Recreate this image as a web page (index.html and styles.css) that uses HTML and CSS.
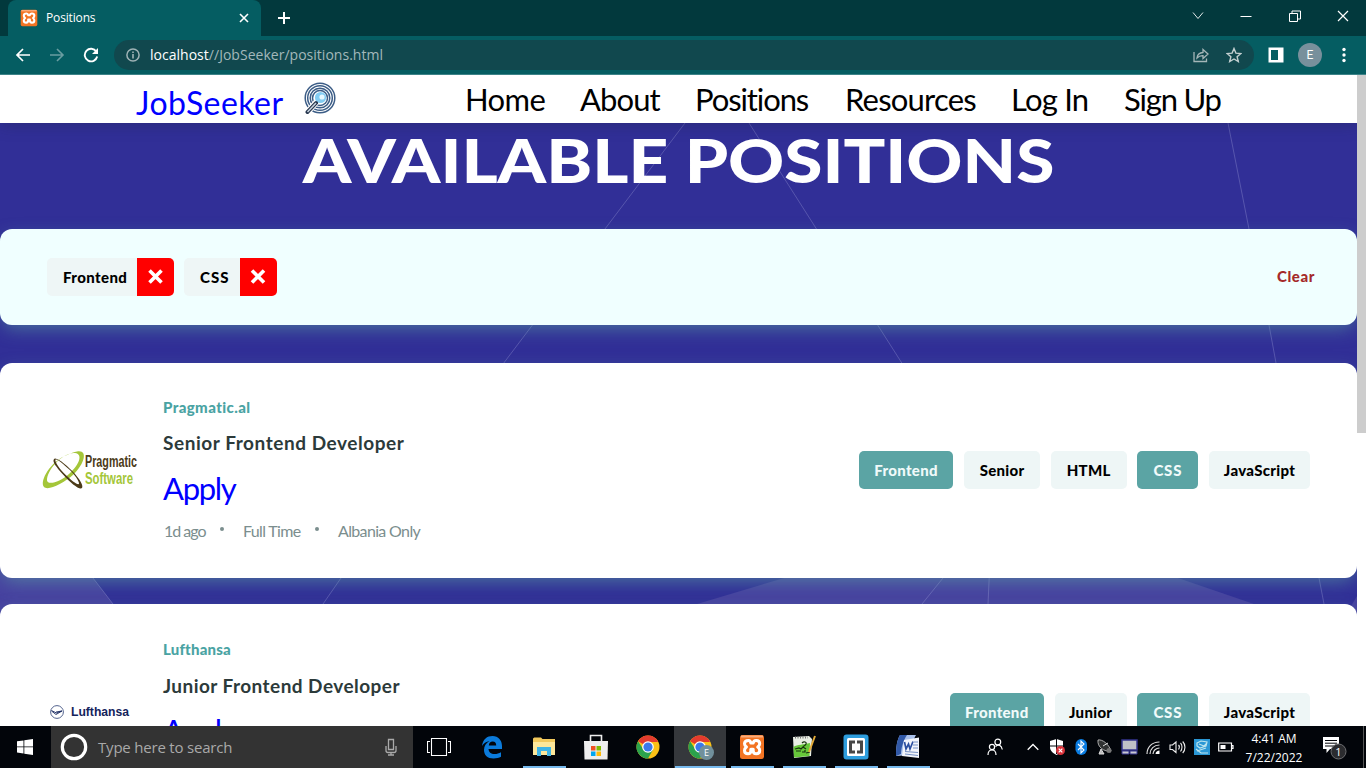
FILE: index.html
```html
<!DOCTYPE html>
<html lang="en">
<head>
<meta charset="utf-8">
<title>Positions</title>
<link rel="stylesheet" href="styles.css">
</head>
<body>
<svg class="defs" width="0" height="0" aria-hidden="true">
  <symbol id="xampp" viewBox="0 0 26 26">
    <rect x="1" y="1" width="24" height="24" rx="2.500" fill="#f37423"/>
    <path d="M2 2.500h22" stroke="#f9ad7c" stroke-width="2"/>
    <path d="M9.500 6.500c-3 0-4 1.200-4 3.200 0 1.700.8 2.500 2 3.300-1.200.8-2 1.800-2 3.500 0 2 1.200 3.200 3.500 3.200 2 0 2.800-1.200 2.800-3v-1.500h2.400v1.500c0 1.800 1 3 3 3 2.200 0 3.500-1.200 3.500-3.200 0-1.700-.8-2.700-2-3.500 1.200-.8 2-1.600 2-3.300 0-2-1.200-3.200-3.500-3.200-2 0-2.800 1-3 2.500h-2.400c-.2-1.500-.8-2.500-2.300-2.500z" fill="none" stroke="#fff" stroke-width="3" stroke-linejoin="round"/>
  </symbol>
  <symbol id="chrome" viewBox="0 0 24 24">
    <circle cx="12" cy="12" r="11.500" fill="#fbc116"/>
    <path d="M12 12 2.040 6.250A11.500 11.500 0 0 1 21.960 6.250L21.500 7H12z" fill="#e33b2e"/>
    <path d="M2.040 6.250A11.500 11.500 0 0 0 12 23.500L16.800 15 12 12 7.500 14.500z" fill="#2ba24c"/>
    <circle cx="12" cy="12" r="5.800" fill="#fff"/><circle cx="12" cy="12" r="4.600" fill="#3b79ea"/>
  </symbol>
</svg>

<div class="tabstrip">
  <div class="tab">
    <svg class="favicon" width="18" height="18"><use href="#xampp"/></svg>
    <span class="tab-title">Positions</span>
    <svg class="tab-close" width="10" height="10" viewBox="0 0 10 10"><path d="M1 1l8 8M9 1L1 9" stroke="#fff" stroke-width="1.600"/></svg>
  </div>
  <svg class="plus" width="14" height="14" viewBox="0 0 14 14"><path d="M7 1v12M1 7h12" stroke="#fff" stroke-width="2"/></svg>
  <div class="winbtns">
    <svg width="12" height="12" viewBox="0 0 12 12"><path d="M1 2.500l5 6 5-6" fill="none" stroke="#e0e8e8"/></svg>
    <svg width="12" height="12" viewBox="0 0 12 12"><path d="M.5 6.500h11" stroke="#fff"/></svg>
    <svg width="12" height="12" viewBox="0 0 12 12"><path d="M.5 3.500h8v8h-8zM3 3V1h8.500v8H9" fill="none" stroke="#fff"/></svg>
    <svg width="12" height="12" viewBox="0 0 12 12"><path d="M1 1l10 10M11 1L1 11" stroke="#fff" stroke-width="1.200"/></svg>
  </div>
</div>

<div class="toolbar">
  <svg class="nav-icon" width="16" height="16" viewBox="0 0 16 16"><path d="M15 8H2M8 2L2 8l6 6" fill="none" stroke="#fff" stroke-width="1.700"/></svg>
  <svg class="nav-icon" width="16" height="16" viewBox="0 0 16 16"><path d="M1 8h13M8 2l6 6-6 6" fill="none" stroke="#6a9da1" stroke-width="1.600"/></svg>
  <svg class="nav-icon" width="16" height="16" viewBox="0 0 16 16"><path d="M13.300 4.500A6.300 6.300 0 1 0 14.200 9.500" fill="none" stroke="#fff" stroke-width="1.900"/><path d="M15 1v6H9z" fill="#fff"/></svg>
  <div class="omnibox">
    <svg width="14" height="14" viewBox="0 0 14 14"><circle cx="7" cy="7" r="6.100" fill="none" stroke="#9fb3b6" stroke-width="1.500"/><path d="M7 6v4.500M7 3.500v1.500" stroke="#9fb3b6" stroke-width="1.600"/></svg>
    <span class="url"><b>localhost</b>//JobSeeker/positions.html</span>
    <svg class="share" width="16" height="16" viewBox="0 0 16 16"><path d="M1 5v9.500h12.500v-3M4 11c.4-3.500 2.500-5.300 6-5.500V2.500l5 4.500-5 4.500V8.700C7.200 8.500 5.500 9.500 4 11z" fill="none" stroke="#a5b6b8" stroke-width="1.300"/></svg>
    <svg width="16" height="16" viewBox="0 0 16 16"><path d="M8 1.500l1.900 4.600 5 .4-3.800 3.200 1.200 4.800L8 12l-4.300 2.500 1.200-4.800L1.100 6.500l5-.4z" fill="none" stroke="#c2cfd0" stroke-width="1.400"/></svg>
  </div>
  <svg class="panel" width="16" height="16" viewBox="0 0 16 16"><path d="M.5.500h15v15H.5zM3 3v10h7V3z" fill="#fff" fill-rule="evenodd"/></svg>
  <span class="avatar">E</span>
  <svg class="dots" width="4" height="16" viewBox="0 0 4 16" fill="#fff"><circle cx="2" cy="2.500" r="1.700"/><circle cx="2" cy="8" r="1.700"/><circle cx="2" cy="13.500" r="1.700"/></svg>
</div>

<div class="viewport">
  <main class="page">
    <svg class="bg" width="1357" height="651" viewBox="0 75 1357 651">
      <g fill="#4742a0">
        <path d="M0 552h73l40 52v10H0z"/>
        <path d="M697 604l87-26h394l76 26z"/>
        <path d="M1357 596v20h-12z"/>
      </g>
      <g stroke="#a9a7dd" stroke-opacity=".32" fill="none">
        <path d="M685 123L500 368M749 123L905 368M1228 123l21 106 20 96 7 38 43 215 5 26M93 578l20 26M341 578l-18 26M990 560l-2 44M943 578l-21 26"/>
      </g>
    </svg>
    <header class="header">
      <a class="brand">JobSeeker</a>
      <svg class="logo" width="32" height="32" viewBox="0 0 32 32">
        <g fill="none" stroke="#3c5d86" stroke-width="1.500"><circle cx="16" cy="16" r="14.800"/><circle cx="16" cy="16" r="12.300"/><circle cx="16" cy="16" r="9.800"/><circle cx="16" cy="16" r="7.500"/></g>
        <circle cx="16.500" cy="15.500" r="5.600" fill="#83cdf3"/><circle cx="18" cy="15" r="2.600" fill="#e8f8ff"/>
        <path d="M12.500 20L3.500 30" stroke="#fff" stroke-width="6"/><path d="M12 21L3.500 30" stroke="#26364d" stroke-width="4" stroke-linecap="round"/><path d="M12 21L3.500 30" stroke="#c8d3df" stroke-width="1.500"/>
      </svg>
      <nav class="menu">
        <a class="m-home">Home</a><a class="m-about">About</a><a class="m-pos">Positions</a><a class="m-res">Resources</a><a class="m-log">Log In</a><a class="m-sign">Sign Up</a>
      </nav>
    </header>
    <h1 class="title">AVAILABLE POSITIONS</h1>
    <section class="filters">
      <div class="filter"><span class="tag-label t-front">Frontend</span><svg class="remove" width="37" height="38" viewBox="0 0 37 38"><path d="M12.500 12.500l12 12M24.500 12.500l-12 12" stroke="#fff" stroke-width="3.600"/></svg></div>
      <div class="filter"><span class="tag-label t-css">CSS</span><svg class="remove" width="37" height="38" viewBox="0 0 37 38"><path d="M12 12.500l12 12M24 12.500l-12 12" stroke="#fff" stroke-width="3.600"/></svg></div>
      <span class="clear">Clear</span>
    </section>

    <article class="card">
      <div class="company-logo">
        <svg width="96" height="40" viewBox="0 0 96 40">
          <path fill-rule="evenodd" d="M35 1.500C46-.5 43 13 32 24 21 34 6 41 2 37-3 31 9 11 25 5c4-2 7-3 10-3.500zM33 3C22 2 7 17 5 29c-1 7 12 4 22-5C38 14 41 4 33 3z" fill="#a4c639"/>
          <path fill-rule="evenodd" d="M12 9c2-3 14 7 21 15s9 14 6 14.500-11-6-18-14S10 12 12 9zm1.500.7c-1 2 4 9 10 15s13 11 13.500 9-4-9-10-14.500-12.500-11-13.500-9.500z" fill="#4b3a18"/>
          <text x="43" y="17" class="prag-a" textLength="52" lengthAdjust="spacingAndGlyphs">Pragmatic</text>
          <text x="43" y="33.500" class="prag-b" textLength="48" lengthAdjust="spacingAndGlyphs">Software</text>
        </svg>
      </div>
      <div class="info">
        <p class="company c-prag">Pragmatic.al</p>
        <h2 class="job j-senior">Senior Frontend Developer</h2>
        <a class="apply">Apply</a>
        <p class="meta"><span class="when">1d ago</span><i class="dot"></i><span class="kind">Full Time</span><i class="dot"></i><span class="where">Albania Only</span></p>
      </div>
      <div class="tags">
        <span class="tag on t-front">Frontend</span><span class="tag t-senior">Senior</span><span class="tag t-html">HTML</span><span class="tag on t-css">CSS</span><span class="tag t-js">JavaScript</span>
      </div>
    </article>

    <article class="card second">
      <div class="company-logo">
        <svg width="96" height="20" viewBox="0 0 96 20">
          <circle cx="15" cy="10" r="6.400" fill="none" stroke="#53638e"/><path d="M9.500 8.500l5 2.500 5-2M9.500 9l4.500 3.500 6-3.500-6 1" fill="none" stroke="#1b2b62" stroke-width=".9"/>
          <text x="29" y="14" class="luft" textLength="58" lengthAdjust="spacingAndGlyphs">Lufthansa</text>
        </svg>
      </div>
      <div class="info">
        <p class="company c-luft">Lufthansa</p>
        <h2 class="job j-junior">Junior Frontend Developer</h2>
        <a class="apply">Apply</a>
      </div>
      <div class="tags">
        <span class="tag on t-front">Frontend</span><span class="tag t-junior">Junior</span><span class="tag on t-css">CSS</span><span class="tag t-js">JavaScript</span>
      </div>
    </article>
  </main>
  <div class="scrollbar"><div class="thumb"></div></div>
</div>

<footer class="taskbar">
  <div class="start"><svg width="16" height="16" viewBox="0 0 16 16" fill="#fff"><path d="M0 2.300L6.500 1.400v6.100H0zM7.300 1.300L16 0v7.500H7.300zM0 8.300h6.500v6.100L0 13.500zM7.300 8.300H16V16l-8.700-1.300z"/></svg></div>
  <div class="search">
    <svg width="28" height="28" viewBox="0 0 28 28"><circle cx="14" cy="14" r="11.700" fill="none" stroke="#fff" stroke-width="3.200"/></svg>
    <span class="search-text">Type here to search</span>
    <svg class="mic" width="12" height="18" viewBox="0 0 12 18"><path d="M3.500 1.500h5v10h-5zM1 8v4.500c0 1.500 1 2 2 2h6c1 0 2-.5 2-2V8M6 14.500V17M3 17h6" fill="none" stroke="#aaa" stroke-width="1.300"/></svg>
  </div>
  <div class="app"><svg width="24" height="20" viewBox="0 0 24 20"><path d="M4.500 1.500h15v17h-15zM3 4.500H.500v11H3M21 4.500h2.500v11H21" fill="none" stroke="#fff" stroke-width="1.100"/></svg></div>
  <div class="app edge"><svg width="22" height="24" viewBox="0 0 22 24"><path d="M1 11C2 4 6 1 11.500 1 17.500 1 21 5.500 21 11v3H7.500c.2 3 2.500 5 6 5 2.500 0 4.500-.6 6.500-1.800v4.600c-2 1-4.500 1.700-7.500 1.700C6.500 23.500 3 20 3 15c0-4 2-7 5.500-9C5 6.500 2.500 8.500 1 11zm6.800-.6h7.400c0-2.500-1.200-4-3.500-4-2.200 0-3.700 1.500-3.900 4z" fill="#0b7bdb"/></svg></div>
  <div class="app run"><svg width="24" height="20" viewBox="0 0 24 20"><path d="M1 2c0-1 1-1.500 2-1.500h6l1.500 1.500H23v16H1z" fill="#f2c95c"/><path d="M1 5h22v13H1z" fill="#fde79a"/><path d="M5 19v-9h14v9h-4v-5H9v5z" fill="#3fb4e6"/></svg></div>
  <div class="app"><svg width="24" height="26" viewBox="0 0 24 26"><path d="M6.500 8V1.500h11V8" fill="none" stroke="#eee" stroke-width="1.600"/><path d="M0 7h24l-.5 18.500H.5z" fill="#eee"/><path d="M7 12h4.500v4.500H7z" fill="#f05022"/><path d="M12.500 12H17v4.500h-4.500z" fill="#80bb01"/><path d="M7 17.500h4.500V22H7z" fill="#01a6f0"/><path d="M12.500 17.500H17V22h-4.500z" fill="#ffba08"/></svg></div>
  <div class="app"><svg width="24" height="24"><use href="#chrome"/></svg></div>
  <div class="app run active"><svg width="24" height="24"><use href="#chrome"/></svg><span class="badge">E</span></div>
  <div class="app run"><svg width="26" height="26"><use href="#xampp"/></svg></div>
  <div class="app run"><svg width="24" height="24" viewBox="0 0 24 24"><path d="M1 2l16-1 3 3-1 17-17 2z" fill="#e9efe5"/><path d="M1.500 12c4-3 10-2 16.500-4l-.5 13-15.500 1.500z" fill="#67c83a"/><path d="M3 2.500h13" stroke="#777" stroke-width="2" stroke-dasharray="1 1.500"/><path d="M3 14l4-1 2 1 2-2 3 2M10 8c2-2 5-1 4 1s-3 2-3 3M10 17h3v-2M14 18l4-1M4 16h5" fill="none" stroke="#17310e" stroke-width="1.200"/><path d="M23 1l-6 16" stroke="#e6ad39" stroke-width="2"/></svg></div>
  <div class="app run"><svg width="26" height="26" viewBox="0 0 26 26"><rect x=".5" y=".5" width="25" height="25" rx="3" fill="#2d9ddd"/><rect x="4" y="4" width="18" height="18" rx="1.500" fill="#fff"/><path d="M6 6.500h6V9.500H9v7h3v3H6zM20 6.500h-6V9.500h3v7h-3v3h6z" fill="#474747"/></svg></div>
  <div class="app run"><svg width="26" height="26" viewBox="0 0 26 26"><path d="M5 1h16c-3 5-5 13-4 20l-16 1C1 13 2 6 5 1z" fill="#a9c0ea"/><path d="M5 1h7C8 7 6 15 6 20l-5 2C1 13 2 6 5 1z" fill="#3159a8"/><path d="M9 6l15-2.500V24l-17-2z" fill="#f2f5fb"/><path d="M9.500 8l1.500 7 2.500-5 1.500 5L18 7.500" fill="none" stroke="#2b4fa0" stroke-width="1.700"/><path d="M19 8h4M18 11h5M18 14h5M10 17.500l13 1M10 20l13 1.500" stroke="#7590c4"/></svg></div>
  <div class="tray">
    <svg class="people" width="16" height="18" viewBox="0 0 16 18"><g fill="none" stroke="#fff" stroke-width="1.200"><circle cx="5" cy="9" r="2.600"/><path d="M1 17c0-3 1.500-5 4-5s4 2 4 5"/><circle cx="10.800" cy="4" r="2.900"/><path d="M8.500 8.500c3-3 6-1 6.800 3"/></g></svg>
    <svg class="chev" width="12" height="8" viewBox="0 0 12 8"><path d="M.7 6.800L6 1.500l5.300 5.300" fill="none" stroke="#fff" stroke-width="1.300"/></svg>
    <svg width="16" height="16" viewBox="0 0 16 16"><path d="M7.500 0L14 2v6c0 4-3 6-6.500 8C4 14 1 12 1 8V2z" fill="#fff"/><path d="M7.500 0v15M1 7h13" stroke="#05070b"/><circle cx="11.500" cy="11.500" r="4.500" fill="#d9333b"/><path d="M9.700 9.700l3.600 3.600m0-3.600l-3.600 3.600" stroke="#fff" stroke-width="1.200"/></svg>
    <svg width="16" height="16" viewBox="0 0 16 16"><rect x="2.500" y="0" width="11.500" height="16" rx="5.700" fill="#0a7ce0"/><path d="M5 5l6 6-3 3V2l3 3-6 6" fill="none" stroke="#fff" stroke-width="1.100"/></svg>
    <svg width="16" height="16" viewBox="0 0 16 16"><path d="M1 1c4-1 11 4 13 11-7 1-14-4-13-11z" fill="#303232" stroke="#bbb" stroke-width=".9"/><path d="M6 7l5-3M2 15h5l-3-5z" stroke="#ddd" fill="#bbb"/><circle cx="12" cy="11.500" r="2.500" fill="#777"/></svg>
    <svg width="17" height="16" viewBox="0 0 17 16"><path d="M1 1h15v10H1z" fill="#bfc1c7" stroke="#34358e" stroke-width="1.500"/><path d="M1 12h7v3H1zM9 12h7v3H9z" fill="#c8c8d0" stroke="#34358e"/></svg>
    <svg width="15" height="15" viewBox="0 0 15 15"><g fill="none" stroke="#ddd" stroke-width="1.200"><path d="M1 14C1 7 6 2 13.500 2M4 14c0-5 4-9 9.500-9M7 14c0-3.500 3-6 6.500-6"/></g><path d="M9.500 14c0-2 2-3.500 4-3.500V14z" fill="#fff"/></svg>
    <svg width="17" height="14" viewBox="0 0 17 14"><path d="M1 5v4.500h2.500L7 12.500V2L3.500 5zM9.500 5c1 1 1 3 0 4.500M11.500 3c2 2 2 6 0 8.500M13.700 1.500c3 3 3 8.500 0 11.500" fill="none" stroke="#eee" stroke-width="1.100"/></svg>
    <svg width="16" height="16" viewBox="0 0 16 16"><path d="M0 0h16v16H0z" fill="#2a97d5"/><path d="M3 4l4-2 6 1-1 4-6 2-3-2zM3 12l9-3M5 5l5 2 3-3M2 10l5 4h7" fill="none" stroke="#bce4ee" stroke-width="1.200"/></svg>
    <svg width="16" height="10" viewBox="0 0 16 10"><path d="M.7 1h12.800v8H.7zM13.500 3.500h1.500v3h-1.500z" fill="none" stroke="#fff" stroke-width="1.200"/><path d="M2.500 3h5v4h-5z" fill="#fff"/></svg>
  </div>
  <div class="clock"><span class="time">4:41 AM</span><span class="date">7/22/2022</span></div>
  <div class="notif"><svg width="26" height="26" viewBox="0 0 26 26"><path d="M1 3h16v12H8l-3.500 4v-4H1z" fill="#fff"/><path d="M3 6.500h12M3 9.200h12M3 12h12" stroke="#05070b"/><circle cx="16.500" cy="17.500" r="7.500" fill="#2b2c2f" stroke="#6c6d70"/><text x="16.500" y="21.500" class="count">1</text></svg></div>
</footer>
</body>
</html>
```
FILE: styles.css
```css
* { box-sizing: border-box; }
body {
  margin: 0;
  width: 1366px;
  height: 768px;
  overflow: hidden;
  display: flex;
  flex-direction: column;
  font-family: Lato, "Open Sans", sans-serif;
  font-variant-ligatures: none;
}
svg { display: block; flex: none; }
p, h1, h2 { margin: 0; }
.defs { display: none; }

/* Browser chrome */
.tabstrip {
  flex: none;
  height: 36px;
  display: flex;
  align-items: center;
  padding-left: 8px;
  background: #02393d;
  font-family: "Open Sans", sans-serif;
}
.tab {
  width: 253px;
  height: 36px;
  display: flex;
  align-items: center;
  padding: 0 12px;
  border-radius: 8px 8px 0 0;
  background: #055d62;
}
.tab-title { margin: -2px 0 0 8px; color: #fff; font-size: 12px; letter-spacing: -.15px; }
.tab-close { margin-left: auto; }
.plus { margin-left: 16px; }
.winbtns { margin-left: auto; display: flex; gap: 36.500px; padding: 0 17px 4px 0; }
.toolbar {
  flex: none;
  height: 39px;
  display: flex;
  align-items: center;
  padding-left: 15px;
  padding-bottom: 1px;
  background: #055d62;
  border-bottom: 1px solid #3c8388;
  font-family: "Open Sans", sans-serif;
}
.nav-icon { margin-right: 18px; }
.omnibox {
  width: 1140px;
  height: 30px;
  margin-left: -3px;
  display: flex;
  align-items: center;
  padding: 0 12px;
  border-radius: 15px;
  background: #11484e;
}
.url { margin-left: 10px; color: #a3b8bb; font-size: 14px; letter-spacing: .02px; white-space: nowrap; }
.url b { color: #fff; font-weight: 400; }
.share { margin-left: auto; margin-right: 17px; }
.panel { margin-left: 14px; }
.avatar {
  width: 24px;
  height: 24px;
  margin-left: 14px;
  border-radius: 50%;
  background: #78909c;
  color: #fff;
  font: 12px/24px Roboto, sans-serif;
  text-align: center;
}
.dots { margin-left: 20px; }

/* Page */
.viewport { flex: none; height: 651px; display: flex; overflow: hidden; }
.page { position: relative; width: 1357px; height: 651px; overflow: hidden; background: #312f97; }
.bg { position: absolute; left: 0; top: 0; }
.scrollbar { width: 9px; background: #fff; }
.thumb { height: 358px; background: #cdcdcd; }
.header {
  position: relative;
  height: 48px;
  display: flex;
  padding-left: 135px;
  background: #fff;
  box-shadow: 0 2px 14px rgba(30, 35, 70, .35);
}
.brand { width: 169px; padding-left: 1px; font-size: 32px; letter-spacing: .45px; line-height: 56px; color: #00f; white-space: nowrap; }
.logo { margin-top: 7px; }
.menu { display: flex; margin-left: 129px; font-size: 31px; line-height: 49px; white-space: nowrap; color: #000; }
.m-home { width: 115px; letter-spacing: -.6px; }
.m-about { width: 115px; letter-spacing: -.9px; }
.m-pos { width: 150px; letter-spacing: -1.100px; }
.m-res { width: 166px; letter-spacing: -.8px; }
.m-log { width: 113px; letter-spacing: -.8px; }
.m-sign { letter-spacing: -1.200px; }
.title {
  position: relative;
  height: 106px;
  padding-top: 1px;
  color: #fff;
  font-size: 60px;
  font-weight: 900;
  line-height: 73px;
  text-align: center;
  white-space: nowrap;
  transform: scaleX(1.155);
}
.filters, .card { position: relative; border-radius: 12px; box-shadow: 0 6px 18px -3px rgba(91, 164, 164, .6); }
.filters {
  height: 96px;
  display: flex;
  align-items: center;
  gap: 10px;
  padding: 0 42px 0 47px;
  margin-bottom: 38px;
  background: #f0ffff;
}
.filter { height: 38px; display: flex; border-radius: 5px; overflow: hidden; background: #eef6f6; }
.tag-label { padding: 0 0 0 16px; font-size: 15px; font-weight: 900; letter-spacing: .4px; line-height: 38px; }
.filter .t-front { width: 90px; }
.filter .t-css { width: 56px; letter-spacing: 1px; }
.remove { background: #f00; }
.clear { margin: -2px 0 0 auto; color: #a52a2a; font-size: 15px; font-weight: 900; letter-spacing: .6px; }
.card { height: 215px; margin-bottom: 26px; display: flex; padding-right: 47px; background: #fff; }
.card.second { padding-top: 1px; }
.company-logo { width: 121px; padding: 0 0 1px 42px; display: flex; align-items: center; }
.info { width: 400px; margin-left: 42px; padding-top: 34px; white-space: nowrap; }
.company { height: 20px; color: #4aa3a3; font-size: 15px; font-weight: 900; letter-spacing: .2px; line-height: 20px; }
.c-prag { letter-spacing: .4px; }
.job { height: 24px; margin-top: 14px; color: #2c3a3a; font-size: 19px; font-weight: 700; letter-spacing: .55px; line-height: 24px; }
.j-junior { margin-top: 15px; letter-spacing: .45px; }
.apply { display: block; height: 40px; margin-top: 13px; color: #00f; font-size: 31px; letter-spacing: -1.300px; line-height: 40px; }
.j-junior + .apply { margin-top: 12px; }
.meta { height: 20px; margin-top: 13px; display: flex; color: #7b8e8e; font-size: 16px; letter-spacing: -.65px; line-height: 20px; }
.when { width: 57px; padding-left: 1px; letter-spacing: -1px; }
.kind { width: 73px; padding-left: 1px; }
.where { padding-left: 1px; }
.dot { width: 4px; height: 4px; margin: 6px 18px 0 0; border-radius: 50%; background: #7b8e8e; }
.tags { margin-left: auto; padding-bottom: 1px; display: flex; gap: 10.670px; align-items: center; }
.tag {
  height: 38px;
  border-radius: 5px;
  background: #eef6f6;
  color: #000;
  font-size: 15px;
  font-weight: 900;
  letter-spacing: .3px;
  line-height: 39px;
  text-align: center;
  white-space: nowrap;
}
.tag.on { background: #5ba4a4; color: #f0fafa; }
.tag.t-front { width: 94.500px; }
.tag.t-senior, .tag.t-html { width: 76px; }
.tag.t-junior { width: 72px; }
.tag.t-css { width: 61px; letter-spacing: .8px; }
.tag.t-js { width: 101px; }
.prag-a, .prag-b { font-family: "Liberation Sans", sans-serif; font-weight: 700; font-size: 16px; }
.company-logo svg { overflow: visible; }
.prag-a { fill: #4b3a18; }
.prag-b { fill: #a4c639; }
.luft { font: 700 12px "Liberation Sans", sans-serif; fill: #14245c; }

/* Taskbar */
.taskbar { flex: none; height: 42px; display: flex; background: #02050a; font-family: "Open Sans", sans-serif; color: #fff; }
.start { width: 51px; padding-left: 17px; display: flex; align-items: center; }
.search { width: 362px; padding: 0 16px 0 9px; display: flex; align-items: center; background: #333; }
.search-text { margin-left: 10px; color: #a9a9a9; font-size: 15px; letter-spacing: -.2px; }
.mic { margin-left: auto; }
.app { position: relative; width: 52px; display: flex; align-items: center; justify-content: center; }
.edge { margin-left: 1px; }
.run::after { content: ""; position: absolute; left: 5px; right: 4px; bottom: 0; height: 2px; background: #76b9ed; }
.active { background: #35383c; }
.active::after { left: 1px; right: 0; }
.badge {
  position: absolute;
  left: 25px;
  top: 19px;
  width: 15px;
  height: 15px;
  border-radius: 50%;
  background: #71909c;
  font-size: 9px;
  line-height: 15px;
  text-align: center;
}
.tray { width: 247px; margin-left: 53px; display: flex; align-items: center; gap: 8px; }
.people { margin-right: 16px; }
.chev { margin-right: 2px; }
.clock { width: 80px; display: flex; flex-direction: column; align-items: center; font-size: 12px; line-height: 19px; padding-top: 3px; }
.notif { margin-left: 8px; display: flex; align-items: center; padding-right: 15px; border-right: 1px solid #555; }
.count { font-size: 11px; fill: #fff; text-anchor: middle; }
```
